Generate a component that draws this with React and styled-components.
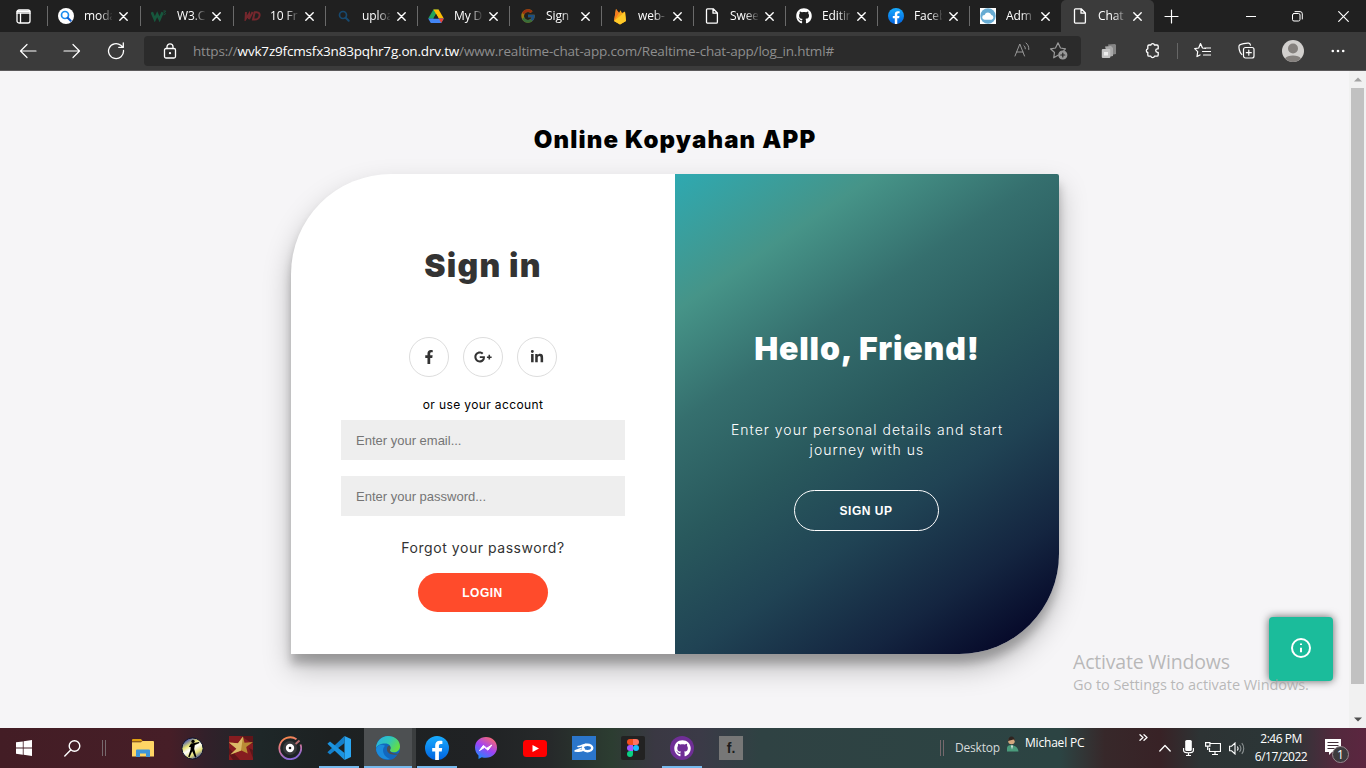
import React from "react";
import styled, { createGlobalStyle } from "styled-components";
import { FaFacebookF, FaGooglePlusG, FaLinkedinIn, FaGithub } from "react-icons/fa";
import { FcGoogle } from "react-icons/fc";

const ui = `"Open Sans", "Noto Sans", sans-serif`;
const brand = `Inter, "Liberation Sans", sans-serif`;

const GlobalStyle = createGlobalStyle`
  * { box-sizing: border-box; }
  body { margin: 0; background: #f6f5f7; overflow: hidden; }
  svg { display: block; flex: none; }
  h1, p { margin: 0; }
`;

const Screen = styled.div`
  width: 1366px; height: 768px; display: flex; flex-direction: column;
  font-family: ${ui}; overflow: hidden;
`;

/* ---------- browser chrome ---------- */
const TabStrip = styled.div`
  height: 32px; background: #202020; display: flex; color: #fff;
`;
const StripMenu = styled.div`
  width: 47px; display: flex; align-items: center; justify-content: center; padding-top: 1px;
`;
const Tab = styled.div`
  width: ${(p) => p.$w || 92}px; height: 32px; display: flex; align-items: center;
  padding-left: ${(p) => (p.$active ? 11 : 10)}px;
  background: ${(p) => (p.$active ? "#3b3b3b" : "transparent")};
  border-radius: 5px 5px 0 0;
`;
const TabDivider = styled.i`
  width: 1px; height: 20px; margin: 6px 0; background: #6a6a6a;
`;
const TabIcon = styled.span`
  width: 16px; height: 16px; display: flex; justify-content: center; align-items: center;
  opacity: ${(p) => (p.$dim ? 0.55 : 1)};
`;
const TabTitle = styled.span`
  width: 28px; margin-left: 10px; overflow: hidden; white-space: nowrap;
  font-size: 12px; line-height: 18px; letter-spacing: -0.1px;
  mask-image: linear-gradient(90deg, #000 55%, rgba(0,0,0,.1) 100%);
`;
const TabClose = styled.span`margin-left: 7px; padding-top: 1px;`;
const NewTab = styled.div`
  width: 35px; display: flex; align-items: center; justify-content: center;
`;
const WindowButtons = styled.div`
  margin-left: auto; display: flex;
`;
const WindowButton = styled.div`
  width: 46px; display: flex; align-items: center; justify-content: center;
`;
const Toolbar = styled.div`
  height: 39px; background: #3b3b3b; border-bottom: 1px solid #5c5a5c;
  display: flex; align-items: center; padding: 0 19px 1px 19px;
`;
const NavButtons = styled.div`
  width: 125px; display: flex; gap: 26px; align-items: center;
`;
const AddressBar = styled.div`
  width: 937px; height: 30px; border-radius: 4px; background: #2b2b2b;
  display: flex; align-items: center; padding: 0 13px 0 18px;
`;
const Url = styled.div`
  margin-left: 15px; flex: 1; font-size: 13.5px; line-height: 20px; color: #8e8e8e; white-space: nowrap;
  letter-spacing: -0.18px;
  b { font-weight: 400; color: #fff; }
`;
const AddressIcons = styled.div`display: flex; gap: 18px;`;
const ToolIcons = styled.div`
  display: flex; align-items: center; gap: 27px; padding-left: 20px;
`;
const ToolRule = styled.i`width: 1px; height: 16px; background: #666; margin: 0 -11px;`;

/* ---------- page ---------- */
const Viewport = styled.div`height: 657px; display: flex; position: relative;`;
const Page = styled.main`
  width: 1349px; background: #f6f5f7; display: flex; flex-direction: column; align-items: center;
  padding: 54px 0 0 1px;
`;
const AppTitle = styled.h1`
  height: 30px; margin-bottom: 19px; font: 900 24px/30px ${brand};
  color: #000; letter-spacing: 1.15px; white-space: nowrap;
`;
const Card = styled.section`
  width: 768px; height: 480px; display: flex; background: #fff; overflow: hidden; flex: none;
  border-radius: 100px 2px 100px 0;
  box-shadow: 0 14px 28px rgba(0,0,0,.25), 0 10px 10px rgba(0,0,0,.22);
`;
const FormPane = styled.div`
  width: 384px; display: flex; flex-direction: column; align-items: center; padding-top: 72px;
`;
const WelcomePane = styled.div`
  width: 384px; display: flex; flex-direction: column; align-items: center; padding-top: 155px; color: #fff;
  background: linear-gradient(146deg, #2ea9b1 0%, #469488 18.5%, #356f6e 34%, #29595d 50%, #204354 66%, #142540 82%, #040526 96%);
`;
const Heading = styled.h1`
  font: 900 32px/40px ${brand}; color: ${(p) => p.$color}; margin-bottom: 51px;
  letter-spacing: ${(p) => p.$ls}px; white-space: nowrap;
`;
const Socials = styled.div`display: flex; gap: 14px; margin-bottom: 18px;`;
const Social = styled.span`
  width: 40px; height: 40px; border: 1px solid #ddd; border-radius: 50%; color: #333;
  display: flex; align-items: center; justify-content: center;
`;
const Hint = styled.span`
  font: 400 12px/20px ${brand}; color: #000; margin-bottom: 5px; letter-spacing: 0.38px;
`;
const Field = styled.input`
  width: 284px; height: 40px; border: 0; background: #eee; padding: 0 15px; margin-bottom: 16px;
  font: 400 13px "Liberation Sans", sans-serif; outline: none;
  &::placeholder { color: #757575; opacity: 1; }
`;
const Forgot = styled.a`
  font: 400 14px/20px ${brand}; color: #333; margin: 6px 0 15px; letter-spacing: 0.55px;
`;
const Pill = styled.button`
  width: ${(p) => (p.$ghost ? 145 : 130)}px; height: ${(p) => (p.$ghost ? 41 : 39)}px; padding: 0 1px 0 0;
  border-radius: 21px; border: ${(p) => (p.$ghost ? "1px solid #fff" : "0")};
  margin-right: ${(p) => (p.$ghost ? 1 : 0)}px;
  background: ${(p) => (p.$ghost ? "transparent" : "#ff4b2b")}; color: #fff;
  font: 700 12px "Liberation Sans", sans-serif; letter-spacing: 0.5px;
`;
const Blurb = styled.p`
  width: 300px; text-align: center; font: 300 14px/20px ${brand}; letter-spacing: 1.03px; margin-bottom: 30px;
`;
const InfoButton = styled.div`
  position: absolute; left: 1269px; top: 546px; width: 64px; height: 64px; border-radius: 4px;
  background: #1bbc9b; box-shadow: 0 0 8px rgba(0,0,0,.6); padding-bottom: 2px;
  display: flex; align-items: center; justify-content: center;
`;
const Watermark = styled.div`
  position: absolute; left: 1073px; top: 579px; color: rgba(160,160,160,.72); white-space: nowrap;
`;
const WatermarkTitle = styled.div`font-size: 19.5px; line-height: 24px; letter-spacing: -0.2px;`;
const WatermarkText = styled.div`font-size: 14.5px; line-height: 22px; letter-spacing: -0.05px;`;
const Scrollbar = styled.div`
  width: 17px; background: #f1f1f1; display: flex; flex-direction: column; align-items: center;
`;
const ScrollArrow = styled.div`
  height: 17px; display: flex; align-items: center;
`;
const ScrollThumb = styled.div`width: 13px; height: 596px; background: #c1c1c1; margin-bottom: 27px;`;

/* ---------- taskbar ---------- */
const Taskbar = styled.footer`
  height: 40px; display: flex; color: #fff;
  background: linear-gradient(90deg, #431d25 0, #461e27 170px, #32202a 205px, #1e2728 260px, #1d2122 330px, #202224 480px,
    #26292a 550px, #2c3d31 612px, #3a3843 655px, #3b3a47 700px, #2f4243 760px, #2c4443 1060px, #37282a 1105px,
    #382226 1160px, #2d3334 1200px, #2b3637 1290px, #53293d 1335px, #5c2640 1366px);
`;
const TaskEdge = styled.div`width: 119px; display: flex; align-items: center; padding-left: 16px;`;
const SearchButton = styled.span`margin: 0 21px 0 32px;`;
const TaskCell = styled.div`
  width: 48px; margin-right: 1px; display: flex; align-items: center; justify-content: center;
  background: ${(p) => (p.$active ? "#4d5052" : "transparent")};
  box-shadow: ${(p) => (p.$active ? "4px 0 0 #3b3e3f" : "none")};
`;
const TaskOpen = styled.div`
  width: ${(p) => (p.$active ? 48 : 40)}px; height: 40px; display: flex; align-items: center; justify-content: center;
  border-top: 2px solid transparent;
  border-bottom: 2px solid ${(p) => (p.$open ? "#76b9ed" : "transparent")};
`;
const Tile = styled.span`
  width: 24px; height: 24px; display: flex; align-items: center; justify-content: center;
  background: ${(p) => p.$bg}; color: ${(p) => p.$fg || "#fff"}; border-radius: ${(p) => p.$r || 0};
  font: 700 14px/24px "Liberation Sans", sans-serif;
`;
const Grip = styled.i`
  width: 4px; height: 16px; border: solid #76696d; border-width: 0 1px;
  margin-right: ${(p) => p.$gap || 0}px;
`;
const Tray = styled.div`margin-left: auto; width: 426px; display: flex; align-items: center;`;
const TrayLabel = styled.span`
  font-size: 12px; line-height: 16px; white-space: nowrap; width: ${(p) => p.$w}px;
  color: ${(p) => p.$color || "#fff"}; letter-spacing: -0.2px;
  margin-bottom: ${(p) => p.$up || 0}px;
`;
const TrayIcon = styled.span`
  width: ${(p) => p.$w}px; display: flex; justify-content: flex-start; margin-bottom: ${(p) => p.$up || 0}px;
`;
const Clock = styled.div`
  width: 60px; text-align: center; font-size: 12px; line-height: 18px; letter-spacing: -0.5px; white-space: nowrap;
  margin: 0 0 1px 6px;
`;
const Notice = styled.span`margin-left: 14px; padding-top: 7px;`;

/* ---------- drawings ---------- */
const Line = ({ s = 16, vb = 16, w = 1, c = "#fff", children, h }) => (
  <svg width={s} height={h || s} viewBox={`0 0 ${vb} ${h ? (vb * h) / s : vb}`} fill="none" stroke={c} strokeWidth={w} strokeLinecap="round" strokeLinejoin="round">
    {children}
  </svg>
);
const Cross = () => <Line s={9} vb={9} w={1.4}><path d="M.8.8l7.4 7.4M8.2.8L.8 8.2" /></Line>;
const PageIcon = () => <Line w={1.3}><path d="M3.5.8h5.7L13.4 5v9a1.2 1.2 0 0 1-1.2 1.2H3.7A1.2 1.2 0 0 1 2.5 14V1.8a1 1 0 0 1 1-1zM9 1v4.2h4.2" /></Line>;
const Lens = ({ dark }) => (
  <svg width="16" height="16" viewBox="0 0 16 16" fill="none">
    {!dark && <circle cx="8" cy="8" r="8" fill="#fff" />}
    <circle cx="7" cy="7" r="3.5" stroke={dark ? "#17496f" : "#1b8df0"} strokeWidth="1.7" />
    <path d="M9.7 9.7l3 3" stroke={dark ? "#17496f" : "#125fd0"} strokeWidth="2" strokeLinecap="round" />
  </svg>
);
const W3 = () => (
  <svg width="16" height="12" viewBox="0 0 16 12" fill="none" stroke="#17573d">
    <path d="M.8 2.2l3 7 2.4-5 2.4 5 3-7" strokeWidth="2.6" />
    <path d="M12.3 1h2.4l-1.3 1.7c1.5 0 1.8 2-.8 2" strokeWidth="1" />
  </svg>
);
const WD = () => (
  <svg width="17" height="10" viewBox="0 0 17 10" fill="none" stroke="#74272d" strokeWidth="2">
    <path d="M2 1l-.4 7L5 3l0 5 3.6-7M10.7 1.2L9 8.5h1.7c5.5 0 6.7-7.3 2-7.3z" />
  </svg>
);
const Drive = () => (
  <svg width="16" height="16" viewBox="0 0 16 16">
    <path d="M5.4 1.5h5.2L5.3 10.8.2 10.4z" fill="#1fa35a" /><path d="M5.4 1.5h5.2l5.2 9h-5.1z" fill="#fbbc04" />
    <path d="M.2 10.5h15.6L13.2 15H2.8z" fill="#4285f4" /><path d="M10.8 10.5h5L13.2 15z" fill="#ea4335" />
    <path d="M8 6l2.6 4.5H5.4z" fill="#202020" />
  </svg>
);
const Firebase = () => (
  <svg width="14" height="17" viewBox="0 0 14 17">
    <path d="M1 13L3 1l3 4 1.5-2.7L9 5l3-1.5L13 13l-6 3.5z" fill="#f8a51b" />
    <path d="M3 1l3 4-5 8z" fill="#f57c20" /><path d="M1 13L12 4l1 9-6 3.5z" fill="#ffca28" />
  </svg>
);
const FbIcon = ({ s }) => (
  <svg width={s} height={s} viewBox="0 0 24 24">
    <defs><linearGradient id={`fb${s}`} x2="0" y2="1"><stop stopColor="#18acfe" /><stop offset="1" stopColor="#0163e0" /></linearGradient></defs>
    <circle cx="12" cy="12" r="12" fill={`url(#fb${s})`} />
    <path d="M16.7 15.5l.5-3.5h-3.3V9.8c0-1 .5-1.9 2-1.9h1.5v-3s-1.4-.2-2.7-.2c-2.7 0-4.5 1.7-4.5 4.6V12h-3v3.500h3V24h3.700v-8.500z" fill="#fff" />
  </svg>
);
const CloudIcon = () => (
  <svg width="16" height="16" viewBox="0 0 16 16"><path fill="#fff" d="M0 0h16v16H0z" /><circle cx="8" cy="8" r="7.7" fill="#68acd3" />
    <path d="M4.6 11.7a2.4 2.4 0 0 1 0-4.8 3.6 3.6 0 0 1 6.8.1 2.4 2.4 0 0 1 .2 4.7z" fill="#fff" /></svg>
);
const WindowsLogo = () => (
  <svg width="16" height="16" viewBox="0 0 16 16" fill="#fff"><path d="M0 2.3L6.8 1.4v6.2H0zM7.6 1.3L16 0v7.6H7.6zM0 8.4h6.8v6.3L0 13.8zM7.6 8.4H16V16l-8.4-1.2z" /></svg>
);
const Explorer = () => (
  <svg width="22" height="18" viewBox="0 0 22 18"><path d="M0 1a1 1 0 0 1 1-1h8l2 2.5H0z" fill="#e0a010" /><path d="M0 3.2h9L10.5 2H21a1 1 0 0 1 1 1v14.5H0z" fill="#ffd665" />
    <path d="M4 18v-6.5a1 1 0 0 1 1-1h12a1 1 0 0 1 1 1V18h-4v-3.5H8V18z" fill="#3f95d8" /></svg>
);
const Strike = () => (
  <svg width="23" height="23" viewBox="0 0 23 23"><defs><linearGradient id="cs" x1=".2" x2=".8" y2="1"><stop offset=".1" stopColor="#5964aa" /><stop offset=".32" stopColor="#e8e478" /><stop offset=".5" stopColor="#fff" /><stop offset=".72" stopColor="#e8e27a" /><stop offset=".95" stopColor="#4450a0" /></linearGradient></defs>
    <circle cx="11.5" cy="11.5" r="10.6" fill="url(#cs)" stroke="#10152c" strokeWidth="1" />
    <circle cx="12" cy="4.400" r="1.700" /><path d="M10 6.500l3-.4 5-1.100.4.900-4.600 2-.6 4 2.300 8.400-1.400.2-2.900-6.300-2.700 6-1.300-.4 2.300-7 .2-2.800-1.900.1z" /></svg>
);
const StarTile = () => (
  <svg width="24" height="24" viewBox="0 0 24 24"><path fill="#861c20" d="M0 0h24v24H0z" /><path d="M0 12L11 24H4L0 18zM12 0h12v8zM20 12l4 2v8z" fill="#5f1519" />
    <path d="M14 .5l1.500 6.200 8.500-.8-6.800 5.200 1.500 6.400-6.200-3L1.500 18.500l6-5.800L0 6.500l9 .7z" fill="#b98c35" /><path d="M14 .5l-2 14L1.500 18.500l6-5.800L0 6.500l9 .7z" fill="#dcbb68" /></svg>
);
const Disc = () => (
  <svg width="24" height="24" viewBox="0 0 24 24" fill="none"><defs><linearGradient id="disc" x2=".3" y2="1"><stop stopColor="#ff8b3e" /><stop offset=".5" stopColor="#dc7790" /><stop offset="1" stopColor="#8a68d5" /></linearGradient></defs>
    <path d="M18.5 3.3A10.9 10.9 0 1 0 22.5 8.5" stroke="url(#disc)" strokeWidth="1.8" /><path d="M17 8.5L21.5 4.5" stroke="#b66d70" strokeWidth="2" />
    <circle cx="12" cy="12" r="7" fill="#383a3c" />
    <circle cx="12" cy="12" r="4.2" fill="#fff" /><circle cx="12" cy="12" r="1.3" fill="#222" /></svg>
);
const Code = () => (
  <svg width="24" height="24" viewBox="0 0 24 24"><path d="M17.5 0L24 3v18l-6.5 3z" fill="#2aa7f3" /><path d="M17.5 0v7L3 18.4.4 16.2z" fill="#1480cb" /><path d="M17.5 24v-7L3 5.6.4 7.8z" fill="#1b93df" /></svg>
);
const Edge = () => (
  <svg width="24" height="24" viewBox="0 0 24 24"><defs><linearGradient id="eg" x2="1" y2=".5"><stop stopColor="#2aaee9" /><stop offset=".55" stopColor="#30c6b8" /><stop offset="1" stopColor="#63dd47" /></linearGradient></defs>
    <circle cx="12" cy="12" r="12" fill="#1267bd" />
    <path d="M0 12C.3 5 5.6 0 12 0c7 0 12 4.8 12 10.2 0 4-3 6.1-6.3 6.1-3 0-4.3-1.3-3.6-2.5C15.7 10 13 7.4 9.2 7.4 4.7 7.4 1 9.5 0 12z" fill="url(#eg)" />
    <path d="M9 9.7c-3.5 3-2.5 10.5 5 13.2-7 1.6-13.2-3-14-10C1.5 8.6 6 7.6 9 9.7z" fill="#1b8bdc" />
    <path d="M14.1 13.8c.9-1.8.6-3.3-.8-4.4-1.7.3-2.6 2.3-2.3 4.6.4 3.2 4.500 5.900 11.300 4.200l1-1c-3.500 1.700-10.300-.8-9.200-3.400z" fill="#4d5052" />
    <path d="M21.500 18.500l2.800-3V22h-5.300z" fill="#4d5052" /></svg>
);
const Messenger = () => (
  <svg width="22" height="22" viewBox="0 0 22 22"><defs><linearGradient id="msg" x1=".2" y1="1" x2=".8" y2="0"><stop stopColor="#168cff" /><stop offset=".5" stopColor="#a042f5" /><stop offset="1" stopColor="#ff6b68" /></linearGradient></defs>
    <path d="M11 0C4.8 0 0 4.5 0 10.6c0 3.2 1.3 6 3.5 7.8V22l3.3-1.8c1.3.4 2.7.6 4.2.6 6.2 0 11-4.4 11-10.3S17.2 0 11 0z" fill="url(#msg)" />
    <path d="M4.5 13.6l3.8-5.2 3.5 2.8 5-3.2-3.8 5.2-3.5-2.8z" fill="#fff" stroke="#fff" strokeLinejoin="round" /></svg>
);
const YouTube = () => <svg width="24" height="17" viewBox="0 0 24 17"><rect width="24" height="17" rx="3.5" fill="#f00" /><path d="M9.5 5l6.500 3.500-6.500 3.500z" fill="#fff" /></svg>;
const Swoosh = () => (
  <svg width="20" height="12" viewBox="0 0 20 12" fill="none" stroke="#fff" strokeLinecap="round"><path d="M2 8.800c4 .8 6.500 0 8-1.800" strokeWidth="2" /><path d="M4 4.500c3.500.3 4-2 8-2.300" strokeWidth="1.600" /><path d="M1 9l6-2.500" strokeWidth="1.500" /><ellipse cx="13.500" cy="6" rx="4.700" ry="3.200" strokeWidth="2.500" /></svg>
);
const Figma = () => (
  <svg width="12" height="18" viewBox="0 0 12 18"><path d="M3 0h3v6H3a3 3 0 0 1 0-6z" fill="#f24e1e" /><path d="M6 0h3a3 3 0 0 1 0 6H6z" fill="#ff7262" /><path d="M3 6h3v6H3a3 3 0 0 1 0-6z" fill="#a259ff" /><circle cx="9" cy="9" r="3" fill="#1abcfe" /><path d="M3 12h3v3a3 3 0 1 1-3-3z" fill="#0acf83" /></svg>
);

const tabs = [
  { t: "moda", icon: <Lens /> },
  { t: "W3.C", icon: <W3 /> },
  { t: "10 Fr", icon: <WD /> },
  { t: "uploa", icon: <Lens dark /> },
  { t: "My D", icon: <Drive /> },
  { t: "Sign", icon: <FcGoogle size={16} />, dim: true },
  { t: "web-", icon: <Firebase /> },
  { t: "Swee", icon: <PageIcon /> },
  { t: "Editin", icon: <FaGithub size={16} /> },
  { t: "Faceb", icon: <FbIcon s={16} /> },
  { t: "Adm", icon: <CloudIcon /> },
];

const tasks = [
  { icon: <Explorer /> },
  { icon: <Strike /> },
  { icon: <StarTile /> },
  { icon: <Disc /> },
  { icon: <Code />, open: true },
  { icon: <Edge />, open: true, active: true },
  { icon: <FbIcon s={24} />, open: true },
  { icon: <Messenger /> },
  { icon: <YouTube /> },
  { icon: <Tile $bg="#2b76cb"><Swoosh /></Tile> },
  { icon: <Tile $bg="#222" $r="2px"><Figma /></Tile> },
  { icon: <Tile $bg="#6f2e96" $r="50%"><FaGithub size={17} /></Tile>, open: true },
  { icon: <Tile $bg="#777" $fg="#1d1d1d">f.</Tile> },
];

export default function App() {
  return (
    <Screen>
      <GlobalStyle />
      <TabStrip>
        <StripMenu><Line s={15} w={1.3} vb={15}><rect x="1" y="1" width="13" height="13" rx="2" /><path d="M1 4.2h13M4.5 4.5v9" /><path d="M1.5 2.5h12" strokeWidth="2" /></Line></StripMenu>
        {tabs.map((tab, i) => (
          <React.Fragment key={tab.t}>
            <TabDivider />
            <Tab $w={i < 2 ? 92 : 91}>
              <TabIcon $dim={tab.dim}>{tab.icon}</TabIcon>
              <TabTitle>{tab.t}</TabTitle>
              <TabClose><Cross /></TabClose>
            </Tab>
          </React.Fragment>
        ))}
        <Tab $active $w={93}>
          <TabIcon><PageIcon /></TabIcon>
          <TabTitle>Chat</TabTitle>
          <TabClose><Cross /></TabClose>
        </Tab>
        <NewTab><Line s={15} vb={15} w={1.2}><path d="M7.5 1v13M1 7.5h13" /></Line></NewTab>
        <WindowButtons>
          <WindowButton><Line s={10} vb={10}><path d="M0 5.5h10" /></Line></WindowButton>
          <WindowButton><Line s={11} vb={11}><rect x=".5" y="2.5" width="7.5" height="7.5" rx="1.5" /><path d="M3 .6h5a2.3 2.3 0 0 1 2.3 2.3V8" /></Line></WindowButton>
          <WindowButton><Line s={11} vb={11} w={1.2}><path d="M.7.7l9.6 9.6M10.3.7L.7 10.3" /></Line></WindowButton>
        </WindowButtons>
      </TabStrip>
      <Toolbar>
        <NavButtons>
          <Line s={18} vb={18} w={1.2}><path d="M17 9H1.5M8 2.5L1.5 9 8 15.5" /></Line>
          <Line s={18} vb={18} w={1.2}><path d="M1 9h15.5M10 2.5L16.5 9 10 15.5" /></Line>
          <Line s={18} vb={18} w={1.3}><path d="M16.5 8.5a7.5 7.5 0 1 1-2.7-5.2L16 5.2M16.3 1v4.4h-4.5" /></Line>
        </NavButtons>
        <AddressBar>
          <Line s={16} w={1.3}><rect x="2.5" y="5.5" width="11" height="9.5" rx="1.5" /><path d="M5 5.5V3.8a3 3 0 0 1 6 0v1.7" /><circle cx="8" cy="10.2" r=".5" /></Line>
          <Url>https://<b>wvk7z9fcmsfx3n83pqhr7g.on.drv.tw</b>/www.realtime-chat-app.com/Realtime-chat-app/log_in.html#</Url>
          <AddressIcons>
            <Line s={18} vb={18} c="#999"><path d="M2 15L6.8 3 11.5 15M3.5 11h6.5M10.8 4.5c1 .8 1.5 2 1.5 3.3M13 2c2 1.6 3 3.7 2.8 6.5" /></Line>
            <Line s={19} vb={19} c="#999" w={1.2}><path d="M9 14.2l-4.3 2.6.8-5.3L1.5 7.8l5-.8L9 1.8 11.5 7l5 .8-1.7 1.7" /><circle cx="13.8" cy="14" r="4" fill="#999" /><path d="M13.8 12v4M11.8 14h4" stroke="#2b2b2b" /></Line>
          </AddressIcons>
        </AddressBar>
        <ToolIcons>
          <svg width="16" height="16" viewBox="0 0 16 16"><path d="M7 1.500l7-.5 1 1v9l-5 1z" fill="#858585" /><path d="M4 3.500l6-.5 2 2v8l-5 1z" fill="#a9a9a9" /><rect x=".8" y="6" width="8.500" height="9" rx="1" fill="#c4c4c4" /><path d="M3 9h4v3.500H3z" fill="#eee" /></svg>
          <Line s={17} vb={17} w={1.3}><path d="M5 3h1.800a1.900 1.900 0 0 1 3.700 0H13a1.200 1.200 0 0 1 1.200 1.200v2.600h-.7a1.800 1.800 0 0 0 0 3.600h.7V13a1.200 1.200 0 0 1-1.200 1.200h-2.500a1.900 1.900 0 0 1-3.700 0H5A1.200 1.200 0 0 1 3.800 13v-2.500a1.900 1.900 0 0 1 0-3.700V4.200A1.200 1.200 0 0 1 5 3z" /></Line>
          <ToolRule />
          <Line s={17} vb={17} w={1.2}><path d="M8.200 5.500L6.500 1.500 4.700 6l-4 .6 3 3-.7 5 3-1.700M10.500 6h6M8.500 9.500h8M9.500 13h7M6.500 1.500l2 4.500 3 .5" /></Line>
          <Line s={17} vb={17} w={1.2}><rect x="5.500" y="5.500" width="10.500" height="10.500" rx="2" /><path d="M10.800 8.200v5M8.300 10.700h5M3.800 12.500C1.500 11 .5 5 1.200 3.500S9 .7 10.800 1.200c1 .3 1.500 1.300 1.700 2" /></Line>
          <svg width="22" height="22" viewBox="0 0 22 22"><circle cx="11" cy="11" r="11" fill="#d2d0ce" /><circle cx="11" cy="8.500" r="5" fill="#85817e" /><path d="M3 18.500c2-4 14-4 16 0A11 11 0 0 1 3 18.500z" fill="#85817e" /></svg>
          <svg width="14" height="4" viewBox="0 0 14 4" fill="#fff"><circle cx="1.800" cy="2" r="1.300" /><circle cx="7" cy="2" r="1.300" /><circle cx="12.200" cy="2" r="1.300" /></svg>
        </ToolIcons>
      </Toolbar>

      <Viewport>
        <Page>
          <AppTitle>Online Kopyahan APP</AppTitle>
          <Card>
            <FormPane>
              <Heading $color="#333" $ls={1.2}>Sign in</Heading>
              <Socials>
                <Social><FaFacebookF size={14} /></Social>
                <Social><FaGooglePlusG size={18} /></Social>
                <Social><FaLinkedinIn size={14} /></Social>
              </Socials>
              <Hint>or use your account</Hint>
              <Field placeholder="Enter your email..." />
              <Field placeholder="Enter your password..." />
              <Forgot>Forgot your password?</Forgot>
              <Pill>LOGIN</Pill>
            </FormPane>
            <WelcomePane>
              <Heading $color="#fff" $ls={0.87}>Hello, Friend!</Heading>
              <Blurb>Enter your personal details and start journey with us</Blurb>
              <Pill $ghost>SIGN UP</Pill>
            </WelcomePane>
          </Card>
        </Page>
        <Scrollbar>
          <ScrollArrow><svg width="8" height="5" viewBox="0 0 8 5"><path d="M0 4.500L4 .5l4 4z" fill="#a3a3a3" /></svg></ScrollArrow>
          <ScrollThumb />
          <ScrollArrow><svg width="8" height="5" viewBox="0 0 8 5"><path d="M0 .5l4 4 4-4z" fill="#505050" /></svg></ScrollArrow>
        </Scrollbar>
        <InfoButton><Line s={20} vb={20} w={2}><circle cx="10" cy="10" r="9" /><path d="M10 9.700v4.600M10 5.500v1.500" strokeLinecap="butt" /></Line></InfoButton>
        <Watermark>
          <WatermarkTitle>Activate Windows</WatermarkTitle>
          <WatermarkText>Go to Settings to activate Windows.</WatermarkText>
        </Watermark>
      </Viewport>

      <Taskbar>
        <TaskEdge>
          <WindowsLogo />
          <SearchButton><Line s={17} vb={17} w={1.4}><circle cx="10.500" cy="6" r="5.300" /><path d="M6.700 10L.8 16" /></Line></SearchButton>
          <Grip />
        </TaskEdge>
        {tasks.map((task, i) => (
          <TaskCell key={i} $active={task.active}>
            <TaskOpen $open={task.open} $active={task.active}>{task.icon}</TaskOpen>
          </TaskCell>
        ))}
        <Tray>
          <Grip $gap={11} />
          <TrayLabel $w={51} $color="#d5dada">Desktop</TrayLabel>
          <TrayIcon $w={19} $up={9}>
            <svg width="13" height="16" viewBox="0 0 13 16"><path d="M1 15.500V12c0-2 2-3 4-3s7 1.500 7.500 6.500z" fill="#4a9b7c" /><circle cx="5.500" cy="5" r="3.300" fill="#d5a87f" /><path d="M2 5c0-6 7-6 7 0L7.500 3.500z" fill="#2f2420" /><path d="M5 9.500l1 4 1-4z" fill="#eee" /></svg>
          </TrayIcon>
          <TrayLabel $w={114} $up={10}>Michael PC</TrayLabel>
          <TrayIcon $w={20} $up={21}><Line s={9} h={7} vb={9} w={1.3}><path d="M1 .8l3 2.700-3 2.700M5 .8l3 2.700-3 2.700" /></Line></TrayIcon>
          <TrayIcon $w={24}><Line s={12} h={8} vb={12} w={1.3}><path d="M.8 7L6 1.500 11.200 7" /></Line></TrayIcon>
          <TrayIcon $w={22}><svg width="11" height="16" viewBox="0 0 11 16"><rect x="2.200" width="6.600" height="11" rx="1.500" fill="#fff" /><path d="M.6 8v2.500c0 3 9.800 3 9.800 0V8M5.500 13v3M3 15.500h5" fill="none" stroke="#fff" strokeWidth="1.200" /></svg></TrayIcon>
          <TrayIcon $w={24}><svg width="16" height="15" viewBox="0 0 16 15" fill="none" stroke="#fff" strokeWidth="1.200"><path d="M5 2.500h10.500v8H4.500V7M7 13.500h6M10 10.500v3M.6 1.600h4.300v3.500H.6zM2.700 5v4" /></svg></TrayIcon>
          <TrayIcon $w={16}><svg width="16" height="13" viewBox="0 0 16 13" fill="none" stroke="#fff" strokeWidth="1.100"><path d="M.6 4.200h2L6 1v11L2.600 8.800h-2zM8.300 4.500c.9 1.200.9 2.800 0 4" /><path d="M10.500 3c1.600 2 1.600 5 0 7M12.800 1.200c2.600 3 2.600 7.500 0 10.600" stroke="#8a9192" /></svg></TrayIcon>
          <Clock>2:46 PM<br />6/17/2022</Clock>
          <Notice>
            <svg width="26" height="25" viewBox="0 0 26 25"><path d="M0 0h16v13h-9l-3 3v-3H0z" fill="#fff" /><path d="M2.500 3.500h11M2.500 6.500h11M2.500 9.500h7" stroke="#43303a" /><circle cx="15.500" cy="15.500" r="8" fill="#3d3b3e" stroke="#96898f" /><text x="15.500" y="20" textAnchor="middle" fill="#fff" fontFamily="Open Sans" fontSize="12">1</text></svg>
          </Notice>
        </Tray>
      </Taskbar>
    </Screen>
  );
}
